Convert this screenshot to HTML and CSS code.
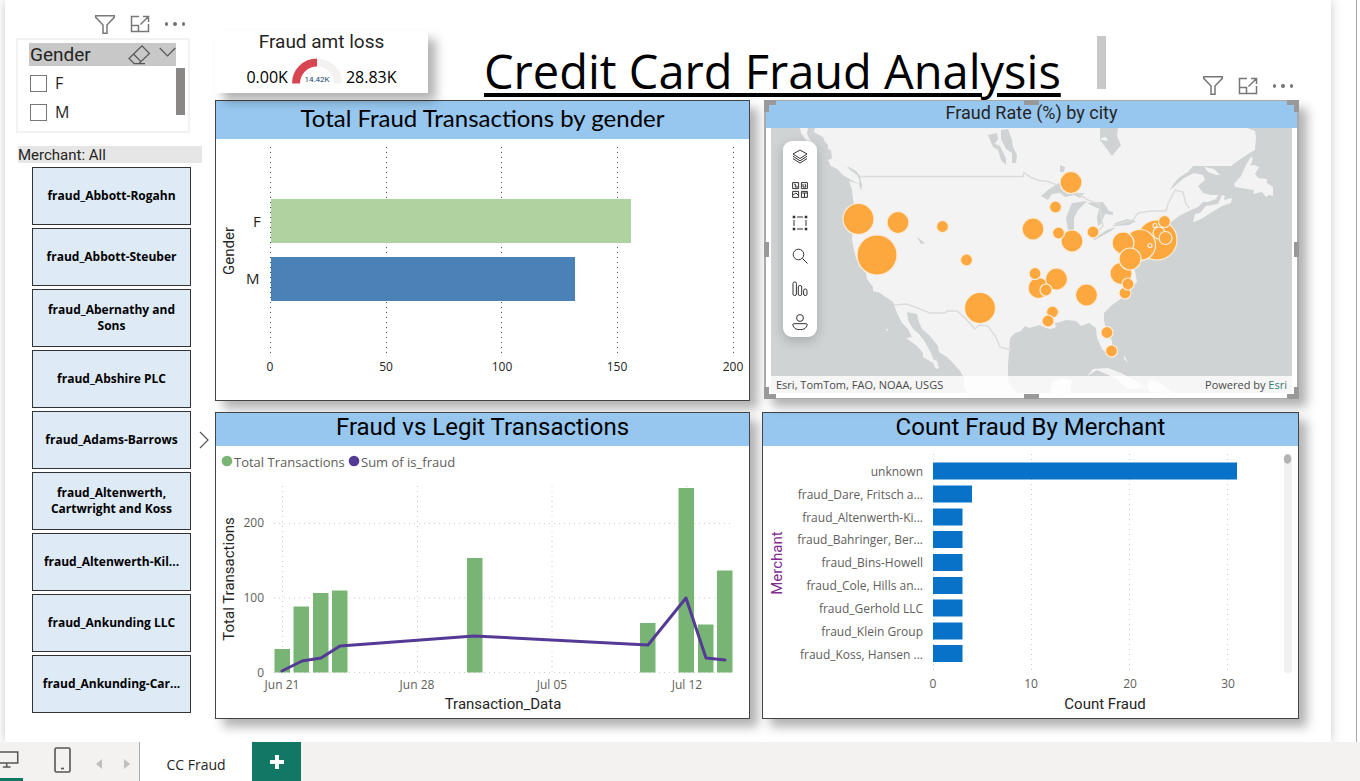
FILE: index.html
```html
<!DOCTYPE html>
<html lang="en">
<head>
<meta charset="utf-8">
<title>Credit Card Fraud Analysis</title>
<link rel="stylesheet" href="styles.css">
</head>
<body>
<svg class="defs" aria-hidden="true">
  <symbol id="i-funnel" viewBox="0 0 20 19"><path d="M.7.7h18.600v1.600L12 10v8.300H8V10L.7 2.300z"/></symbol>
  <symbol id="i-focus" viewBox="0 0 20 18"><path d="M9 1.500H1.500v15h17V9M1.500 10.500h7v6M10.500 9.500l8-8M13 1.500h5.500V7"/></symbol>
</svg>
<main class="workspace">
  <div class="canvas">
    <aside class="sidebar">
      <div class="tools">
        <button aria-label="Filters"><svg width="20" height="19"><use href="#i-funnel"/></svg></button>
        <button aria-label="Focus mode"><svg width="20" height="18"><use href="#i-focus"/></svg></button>
        <button aria-label="More options" class="dots"><i></i><i></i><i></i></button>
      </div>
      <section class="gender">
        <header>
          <h2>Gender</h2>
          <button aria-label="Clear selections"><svg width="23" height="20" viewBox="0 0 23 20"><path d="M1 13.500 14 .9l7.500 7.600L11 18.500H6zM5.500 9l7.700 7.800M6 18.700h11"/></svg></button>
          <button aria-label="Expand"><svg width="17" height="20" viewBox="0 0 17 20"><path d="M.7 3 8.500 10.800 16.300 3"/></svg></button>
        </header>
        <div class="options">
          <div class="checks">
            <label><input type="checkbox">F</label>
            <label><input type="checkbox">M</label>
          </div>
          <div class="thumb"></div>
        </div>
      </section>
      <h2 class="merchant-title">Merchant: All</h2>
      <div class="merchants">
        <button>fraud_Abbott-Rogahn</button>
        <button>fraud_Abbott-Steuber</button>
        <button>fraud_Abernathy and Sons</button>
        <button>fraud_Abshire PLC</button>
        <button>fraud_Adams-Barrows</button>
        <button>fraud_Altenwerth, Cartwright and Koss</button>
        <button>fraud_Altenwerth-Kil...</button>
        <button>fraud_Ankunding LLC</button>
        <button>fraud_Ankunding-Car...</button>
        <button class="next" aria-label="Next merchants"><svg width="10" height="18" viewBox="0 0 10 18"><path d="M1 1l8 8-8 8"/></svg></button>
      </div>
    </aside>

    <div class="report">
      <div class="top">
        <section class="gauge">
          <h2>Fraud amt loss</h2>
          <div class="gauge-row">
            <span>0.00K</span>
            <svg width="50" height="26" viewBox="0 0 50 26">
              <path d="M4 25.500A21 21 0 0 1 25 4.500" stroke="#d64550" stroke-width="8" fill="none"/>
              <path d="M25 4.500A21 21 0 0 1 46 25.500" stroke="#f3f2f1" stroke-width="8" fill="none"/>
              <text x="25" y="24" text-anchor="middle">14.42K</text>
            </svg>
            <span>28.83K</span>
          </div>
        </section>
        <h1>Credit Card Fraud Analysis</h1>
        <div class="grip"></div>
        <div class="tools">
          <button aria-label="Filters"><svg width="20" height="19"><use href="#i-funnel"/></svg></button>
          <button aria-label="Focus mode"><svg width="20" height="18"><use href="#i-focus"/></svg></button>
          <button aria-label="More options" class="dots"><i></i><i></i><i></i></button>
        </div>
      </div>

      <div class="cards">
        <section class="card by-gender">
          <h2>Total Fraud Transactions by gender</h2>
          <svg class="plot" viewBox="216 139 533 261">
            <path class="grid-dark" d="M270.500 147v210M386.500 147v210M501.500 147v210M617.500 147v210M733.500 147v210"/>
            <rect x="271" y="199" width="360" height="44" fill="#afd3a0"/>
            <rect x="271" y="257" width="304" height="44" fill="#4a82b8"/>
            <g class="cat"><text x="253" y="227">F</text><text x="246" y="284">M</text></g>
            <g class="tick-dark" text-anchor="middle"><text x="270" y="371">0</text><text x="386" y="371">50</text><text x="502" y="371">100</text><text x="617" y="371">150</text><text x="733" y="371">200</text></g>
            <text class="axis" text-anchor="middle" transform="translate(234 251) rotate(-90)">Gender</text>
          </svg>
        </section>

        <section class="card map">
          <h2>Fraud Rate (%) by city</h2>
          <div class="map-body">
            <svg class="plot" viewBox="771 128 521 265">
              <rect x="771" y="128" width="521" height="265" fill="#cfd3d3"/>
              <path class="land" d="M815 128L814 132 819 135 823 137 825 142 828 145 828 149 831 150 832 158 837 162 847 168 855 174 860 178 862 185 861 191 859 184 849 181 852 190 853 199 854 205 853 225 852 240 854 250 856 258 860 267 866 273 867 279 873 287 873 291 880 293 893 302 897 313 902 323 908 329 912 337 906 338 917 346 923 353 923 357 933 363 936 369 939 368 937 361 933 359 932 355 925 342 919 334 913 329 908 320 907 312 917 314 919 322 922 329 930 336 938 346 939 352 947 357 953 363 960 371 964 378 964 386 967 393H1017L1012 388 1008 381 1008 364 1009 352 1010 338 1015 333 1021 331 1025 326 1029 328 1040 325 1046 328 1051 329 1056 327 1055 323 1060 322 1066 320 1076 321 1081 326 1089 323 1096 328 1097 338 1102 349 1108 355 1112 353 1112 341 1107 331 1104 321 1104 313 1112 305 1119 300 1128 293 1132 287 1137 282 1135 271 1131 261 1140 257 1149 250 1160 246 1173 242 1169 233 1168 225 1171 222 1179 216 1189 211 1198 207 1203 202 1208 202 1216 199 1218 195 1211 195 1203 193 1198 186 1205 180 1203 175 1194 173 1184 178 1170 190 1175 182 1180 177 1188 172 1193 166H1231L1239 160 1248 154 1255 150 1256 137 1255 131 1247 128z"/>
              <path class="land" d="M800 128h8l-1 6 4 7-5-1-5-7zM828 160l5-2 8 6 8 5 11 9-1 6-8-4-8-5-6-6-6-3zM1193 222l2-8 5-1 6-7 12-2 4-9 3 1-1 4 8-2-1 5-9 3-13 8-8 5-7 3zM1257 152l-5 3-6 10-5 11-7 8 1 3 19 3-1 4 9-2 4 5 3-2 4 1 0-9-6-4 0-4-9-1-3-4 4-7-5-2-4 1 3-7-2-3zM1204 167l10 2 6 6-4 0-8-3zM1124 355l4 8-4-4zM1087 376l6-7 15-1 13 5 13 7 13 8-19 1-13-11-18-8zM1050 393l2-11 9-4 11 2-2 13zM1149 380l10 2 14 11-22-1-4-4zM1231 131l6-3-2 5zM885 330l3-1 0 2z"/>
              <path class="water" d="M847 166l9 5 4 5 1 7-4-8-8-6zM1100 128h18l-1 8 4 9-9 11-6-8-6-8zM988 135l9-2 1 6-3 5 5 2 6 12 0 7-5-5-3-10-5-3zM1001 130l7-1 4 11 1 7 4 8-1 8-4 0 0-10-6-4-5-10zM1041 196l7-6 11-7 9 3 8 7 8 0-4 5-6-3-9 2-5-4-8 1-4 6zM1072 203l15-2-9 9-4 8 0 13-6-1-2-12 3-8zM1087 203l16-1 6 9 4 1 0 3-8-1-4 10-3 2-1-9 2-8zM1093 239l14-9 9-3-5 4-16 9zM1115 223l12-4 9 2-7 4-14 1zM1060 165l5 2-1 5-4 0zM917 237l8 6-4 1z"/>
              <path class="land" d="M1101 138l5-1 2 4-7-1z"/>
              <path class="border" d="M860 176.500h163l1-4 7 5 8 3 9 1 10 4M1113 226l8-3 12-3 5-7 13-2 15 0 2-7 7-14 8 2 3 12 3 4M1064 185l24 15 11 4 4 22-12 12M894 305l13-1 23 9h15l2-2h10l8 7 10 11 4-4 9 1 8 11 4 10 11 3"/>
              <g class="bubbles">
                <circle cx="858.500" cy="219" r="15.500"/><circle cx="898" cy="222.500" r="11"/><circle cx="942.500" cy="226.500" r="6"/><circle cx="877" cy="255" r="20"/><circle cx="966.500" cy="260" r="6"/><circle cx="980" cy="308" r="15.500"/>
                <circle cx="1071" cy="182.500" r="11"/><circle cx="1055.500" cy="207" r="6"/><circle cx="1033" cy="229" r="11"/><circle cx="1072" cy="241" r="11"/><circle cx="1058.500" cy="233" r="6"/><circle cx="1093" cy="232" r="6"/>
                <circle cx="1157" cy="240" r="20"/><circle cx="1140" cy="245" r="15.500"/><circle cx="1123" cy="243" r="11"/><circle cx="1159" cy="233" r="6"/><circle cx="1164.500" cy="221.500" r="6"/><circle cx="1165.500" cy="238" r="6.500"/><circle cx="1155" cy="225.500" r="2"/><circle cx="1150" cy="245.500" r="2"/>
                <circle cx="1121" cy="273.500" r="11"/><circle cx="1130" cy="259" r="11"/><circle cx="1125" cy="293" r="6"/><circle cx="1128" cy="284" r="6"/>
                <circle cx="1038.500" cy="288" r="10.500"/><circle cx="1035" cy="273.500" r="6"/><circle cx="1056.500" cy="279" r="11"/><circle cx="1046" cy="290" r="6"/><circle cx="1086.500" cy="295" r="11"/><circle cx="1052.500" cy="312" r="6"/><circle cx="1048" cy="321" r="6"/><circle cx="1107" cy="332.500" r="6"/><circle cx="1111.500" cy="351" r="6"/>
              </g>
            </svg>
            <div class="map-tools">
              <button aria-label="Layers"><svg viewBox="0 0 16 16"><path d="M8 1l7 4-7 4.500L1 5zM1 7.300l7 4.500 7-4.500M1 9.600l7 4.500 7-4.500"/></svg></button>
              <button aria-label="Basemap"><svg viewBox="0 0 16 16"><path d="M.6.6h6v6h-6zM9.400.6h6v6h-6zM.6 9.400h6v6h-6zM9.400 9.400h6v6h-6zM2 2l2 1-1 2 3 0M11 2v3M13 2l1 3M11 5h3M1 13l3-2 2 2M10 11h5M12.500 11v4"/></svg></button>
              <button aria-label="Select"><svg viewBox="0 0 16 16"><path d="M5 2h6M5 14h6M2 5v6M14 5v6"/><path class="solid" d="M.7.7h2.600v2.600H.7zM12.700.7h2.600v2.600h-2.600zM.7 12.700h2.600v2.600H.7zM12.700 12.700h2.600v2.600h-2.600z"/></svg></button>
              <button aria-label="Search"><svg viewBox="0 0 16 16"><circle cx="6.500" cy="6.500" r="5.300"/><path d="M10.500 10.500l5 5"/></svg></button>
              <button aria-label="Infographics"><svg viewBox="0 0 16 16"><rect x="1" y="1" width="3.400" height="13.500" rx="1.500"/><rect x="6.300" y="4.500" width="3.400" height="10" rx="1.500"/><rect x="11.600" y="8" width="3.400" height="6.500" rx="1.500"/></svg></button>
              <button aria-label="Account"><svg viewBox="0 0 16 16"><circle cx="8" cy="4" r="3.400"/><path d="M1.700 9.700h12.600q1 0 .9 1-.8 5-7.200 5t-7.200-5q-.1-1 .9-1z"/></svg></button>
            </div>
            <div class="credits"><span>Esri, TomTom, FAO, NOAA, USGS</span><span>Powered by <a href="#">Esri</a></span></div>
          </div>
          <i class="h tl"></i><i class="h tr"></i><i class="h bl"></i><i class="h br"></i>
          <i class="m tc"></i><i class="m bc"></i><i class="m lc"></i><i class="m rc"></i>
        </section>

        <section class="card legit">
          <h2>Fraud vs Legit Transactions</h2>
          <svg class="plot" viewBox="216 446 533 272">
            <g class="legend"><circle cx="227" cy="461" r="5.300" fill="#78b574"/><text x="234" y="467">Total Transactions</text><circle cx="354" cy="461" r="5.300" fill="#553a95"/><text x="361" y="467">Sum of is_fraud</text></g>
            <path class="grid" d="M282.500 486v187M417.500 486v187M552 486v187M687 486v187M274 523.500h459M274 598h459M274 672.500h459"/>
            <path fill="#78b574" d="M274.500 649h15.500v23.500h-15.500zM293.500 606.500h15.500v66h-15.500zM313 593h15.500v79.500h-15.500zM332 590.500h15.500v82h-15.500zM467 558h15.500v114.500h-15.500zM640 623h15.500v49.500h-15.500zM678.500 488h15.500v184.500h-15.500zM698 624.500h15.500v48h-15.500zM717 570.500h15.500v102h-15.500z"/>
            <path d="M282 671L302 661 321 658 340 646 474 636 648 645 686 598 706 658 725 660" fill="none" stroke="#553a95" stroke-width="3" stroke-linecap="round" stroke-linejoin="round"/>
            <g class="tick" text-anchor="end"><text x="264" y="527">200</text><text x="264" y="602">100</text><text x="264" y="677">0</text></g>
            <g class="tick" text-anchor="middle"><text x="282" y="689">Jun 21</text><text x="417" y="689">Jun 28</text><text x="552" y="689">Jul 05</text><text x="687" y="689">Jul 12</text></g>
            <text class="axis" x="503" y="709" text-anchor="middle">Transaction_Data</text>
            <text class="axis" text-anchor="middle" transform="translate(234 579) rotate(-90)">Total Transactions</text>
          </svg>
        </section>

        <section class="card count">
          <h2>Count Fraud By Merchant</h2>
          <svg class="plot" viewBox="763 446 535 272">
            <path class="grid" d="M933.500 454v220M1031.500 454v220M1129.500 454v220M1227.500 454v220"/>
            <path fill="#0871c8" d="M933 462.500h304v17H933zM933 485.500h39v17h-39zM933 508.500h29.500v17H933zM933 531h29.500v17H933zM933 554h29.500v17H933zM933 577h29.500v17H933zM933 599.500h29.500v17H933zM933 622.500h29.500v17H933zM933 645h29.500v17H933z"/>
            <g class="tick" text-anchor="end">
              <text x="923" y="476">unknown</text><text x="923" y="499">fraud_Dare, Fritsch a...</text><text x="923" y="522">fraud_Altenwerth-Ki...</text><text x="923" y="544">fraud_Bahringer, Ber...</text><text x="923" y="567">fraud_Bins-Howell</text><text x="923" y="590">fraud_Cole, Hills an...</text><text x="923" y="613">fraud_Gerhold LLC</text><text x="923" y="636">fraud_Klein Group</text><text x="923" y="659">fraud_Koss, Hansen ...</text>
            </g>
            <g class="tick" text-anchor="middle"><text x="933" y="688">0</text><text x="1031" y="688">10</text><text x="1130" y="688">20</text><text x="1228" y="688">30</text></g>
            <text class="axis" x="1105" y="709" text-anchor="middle">Count Fraud</text>
            <text class="axis purple" text-anchor="middle" transform="translate(782 563) rotate(-90)">Merchant</text>
            <rect x="1284" y="454" width="8" height="219" rx="4" fill="#f0f0f0"/><ellipse cx="1287.500" cy="459" rx="3.700" ry="4.700" fill="#b3b3b3"/>
          </svg>
        </section>
      </div>
    </div>
  </div>
</main>
<footer class="pages">
  <button class="view desktop" aria-label="Desktop layout"><svg width="24" height="20" viewBox="0 0 24 20"><path d="M0 1.700h18.500v11.500H0M3 17.200h8M7 13v4"/></svg></button>
  <button class="view" aria-label="Mobile layout"><svg width="17" height="26" viewBox="0 0 17 26"><rect x="1" y="1" width="15" height="24" rx="1.500"/><path d="M7 21.500h3"/></svg></button>
  <button class="step" aria-label="Previous page"><svg width="6" height="12" viewBox="0 0 6 12"><path d="M6 1v10L0 6z"/></svg></button>
  <button class="step" aria-label="Next page"><svg width="6" height="12" viewBox="0 0 6 12"><path d="M0 1v10l6-5z"/></svg></button>
  <button class="tab">CC Fraud</button>
  <button class="add" aria-label="New page"><svg width="14" height="14" viewBox="0 0 14 14"><path d="M7 0v14M0 7h14"/></svg></button>
</footer>
</body>
</html>
```
FILE: styles.css
```css
* { box-sizing: border-box; }
body {
  margin: 0;
  min-height: 100vh;
  display: flex;
  flex-direction: column;
  background: #fff;
  color: #252423;
  font-family: "Open Sans", "Noto Sans", sans-serif;
}
h1, h2 { margin: 0; font-weight: 400; }
button { border: 0; padding: 0; background: none; font: inherit; color: inherit; display: flex; align-items: center; justify-content: center; }
svg { display: block; fill: none; }
.defs { position: absolute; width: 0; height: 0; }

.workspace {
  flex: 1;
  display: flex;
  margin-right: 3px;
  padding: 0 25px 0 5px;
  border-right: 1px solid #a8a8a8;
  overflow: hidden;
}
.canvas {
  flex: 1;
  display: grid;
  grid-template-columns: 187px 1fr;
  column-gap: 12px;
  padding: 0 32px 23px 11px;
  box-shadow: 0 0 10px rgba(0, 0, 0, .22);
}

.tools { display: flex; align-items: center; gap: 15px; stroke: #777; stroke-width: 1.500; }
.dots { gap: 5px; width: 20px; }
.dots i { width: 4px; height: 4px; border-radius: 50%; background: #777; }

.sidebar .tools { height: 38px; padding: 10px 0 0 79px; }
.gender { width: 174px; height: 95px; padding: 3px 3px 0 11px; border: 2px solid #f2f2f2; }
.gender header { display: flex; align-items: center; gap: 8px; height: 23px; width: 147px; background: #c8c8c8; stroke: #555; stroke-width: 1.200; }
.gender h2 { flex: 1; font: 400 19px/25px Roboto, sans-serif; padding-left: 1px; }
.options { display: flex; justify-content: space-between; padding-top: 2px; }
.checks { display: grid; gap: 7px; padding: 4px 0 0 1px; }
.checks label { display: flex; align-items: center; gap: 8px; height: 22px; font-size: 16px; }
.checks input { appearance: none; width: 17px; height: 17px; margin: 0; border: 1px solid #777; background: #fff; }
.thumb { width: 9px; height: 47px; background: #8a8886; }
.merchant-title { margin: 13px 1px 0 2px; height: 17px; background: #e6e6e6; font: 400 15px/18px Roboto, sans-serif; }
.merchants { position: relative; display: grid; gap: 3px; margin: 4px 12px 0 16px; }
.merchants button { height: 58px; padding: 0 6px; border: 1px solid #333; background: #deeaf6; color: #000; font-size: 12px; line-height: 16px; font-weight: 700; }
.merchants .next { position: absolute; left: 167px; top: 264px; width: 10px; height: 18px; padding: 0; border: 0; background: none; stroke: #555; stroke-width: 1.200; }

.top { display: flex; align-items: flex-start; height: 100px; }
.gauge { position: relative; width: 213px; height: 62px; margin-top: 31px; background: #fff; box-shadow: 8px 8px 10px rgba(0, 0, 0, .3); }
.gauge h2 { font: 400 19px/22px Roboto, sans-serif; text-align: center; }
.gauge-row { display: flex; align-items: flex-end; justify-content: center; gap: 4px; margin-top: 4px; font-size: 16px; line-height: 20px; color: #000; }
.gauge-row span { padding-bottom: 2px; }
.gauge-row svg { margin-bottom: 5px; margin-top: 1px; }
.gauge-row text { font: 400 8px Roboto, sans-serif; fill: #12456f; }
h1 { margin: 36px 0 0 56px; font-size: 47px; line-height: 70px; font-weight: 400; color: #000; text-decoration: underline; text-decoration-thickness: 4px; text-underline-offset: 4px; white-space: nowrap; }
.grip { width: 9px; height: 53px; margin: 36px 0 0 36px; background: #c8c8c8; }
.top .tools { margin: 76px 6px 0 auto; }

.cards { display: grid; grid-template-columns: 535fr 537fr; column-gap: 12px; row-gap: 11px; }
.card { border: 1px solid #444; background: #fff; box-shadow: 8px 8px 10px rgba(0, 0, 0, .3); }
.card h2 { background: #97c7ef; color: #000; text-align: center; font: 400 24px/29px Roboto, sans-serif; padding-bottom: 4px; }
.plot { width: 100%; height: auto; }
.card.by-gender h2 { font: 400 24px/34px Lato, sans-serif; }
.map { position: relative; margin-left: 2px; padding-bottom: 5px; align-self: start; border: 2px solid #aaa; border-top-width: 1px; border-bottom-width: 1px; }
.card.map h2 { font-size: 18px; line-height: 23px; padding-bottom: 4px; color: #252423; }
.map-body { position: relative; margin: 0 5px; }
.map-tools { position: absolute; left: 12px; top: 13px; display: grid; gap: 17px; padding: 8px 9px 7px 9px; border-radius: 9px; background: #fff; box-shadow: 0 4px 12px rgba(0, 0, 0, .2); stroke: #333; }
.map-tools svg { width: 16px; height: 16px; }
.map-tools .solid { fill: #333; stroke: none; }
.credits { position: absolute; left: 0; right: 0; bottom: 0; height: 17px; padding: 0 5px; display: flex; justify-content: space-between; background: rgba(255, 255, 255, .8); font-size: 11px; line-height: 17px; color: #4a4a4a; }
.credits a { color: #2f7d6d; text-decoration: none; }
.h, .m { position: absolute; border: 0 solid #999; }
.h { width: 12px; height: 12px; }
.m { background: #999; width: 15px; height: 5px; }
.tl { left: -2px; top: -1px; border-width: 5px 0 0 5px; }
.tr { right: -2px; top: -1px; border-width: 5px 5px 0 0; }
.bl { left: -2px; bottom: -1px; border-width: 0 0 5px 5px; }
.br { right: -2px; bottom: -1px; border-width: 0 5px 5px 0; }
.tc { left: calc(50% - 8px); top: -1px; }
.bc { left: calc(50% - 8px); bottom: -1px; }
.lc, .rc { width: 5px; height: 15px; top: calc(50% - 8px); }
.lc { left: -2px; }
.rc { right: -2px; }

.land { fill: #f3f3f3; }
.water { fill: #cfd3d3; }
.border { stroke: #dcdcdc; stroke-width: 1.500; }
.bubbles { fill: #fca83f; stroke: #faeddc; stroke-width: 1.200; }
.grid-dark { stroke: #555; stroke-dasharray: 1 4; }
.grid { stroke: #ccc; stroke-dasharray: 1 4; }
.plot text { fill: #605e5c; font-family: "Open Sans", sans-serif; font-size: 12px; }
.plot .tick-dark text { fill: #252423; }
.plot .cat text { fill: #252423; font-size: 15px; }
.plot .legend text { font-size: 13px; }
.plot text.axis { fill: #252423; font-family: Roboto, sans-serif; font-size: 15px; }
.plot text.purple { fill: #822a8f; }

.pages { display: flex; height: 39px; background: #f3f2f0; }
.view { stroke: #555; stroke-width: 1.600; width: 45px; padding-bottom: 3px; }
.view.desktop { width: 23px; justify-content: flex-start; border-bottom: 3px solid #117865; margin-right: 17px; padding-bottom: 0; }
.step { width: 28px; padding-top: 4px; }
.step svg { fill: #c2c0be; }
.tab { width: 113px; margin-left: -2px; border-left: 1px solid #aaa; background: #fff; padding-top: 6px; font-size: 14px; }
.add { width: 49px; background: #117865; stroke: #fff; stroke-width: 4; }
```
